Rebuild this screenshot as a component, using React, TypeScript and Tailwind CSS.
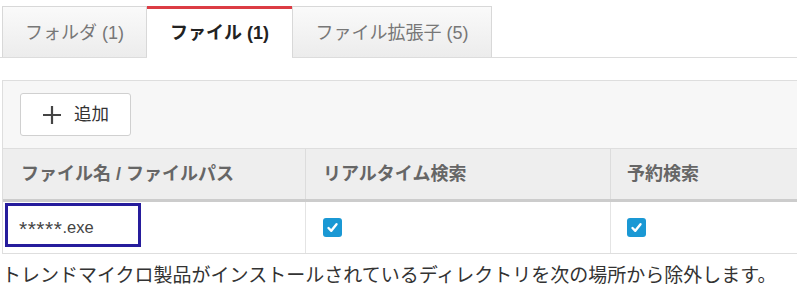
import React from "react";

const font = { fontFamily: '"Liberation Sans", "Noto Sans CJK JP", sans-serif' };

function Check() {
  return (
    <div className="w-[19px] h-[19px] rounded-[3px] bg-[#1a98d4] flex items-center justify-center">
      <svg width="13" height="13" viewBox="0 0 13 13">
        <path d="M2.5 7 L5.3 9.8 L10.5 3.2" fill="none" stroke="white" strokeWidth="2.4" strokeLinecap="round" strokeLinejoin="round" />
      </svg>
    </div>
  );
}

export default function App() {
  return (
    <div className="relative w-[800px] h-[300px] bg-white overflow-hidden" style={font}>
      <div className="flex pt-[6px] pl-[2px] w-[797px] border-b border-[#dcdcdc]">
        <div className="w-[145px] h-[51px] pt-[2px] flex items-center justify-center border border-b-0 border-[#d8d8d8] bg-gradient-to-b from-[#fafafa] to-[#ececec] text-[18px] text-[#777]">
          フォルダ (1)
        </div>
        <div className="w-[145px] h-[52px] -mb-px flex items-center justify-center border-t-[3px] border-t-[#dc3c44] bg-white text-[18px] font-bold text-[#222]">
          ファイル (1)
        </div>
        <div className="w-[200px] h-[51px] pt-[2px] flex items-center justify-center border border-b-0 border-[#d8d8d8] bg-gradient-to-b from-[#fafafa] to-[#ececec] text-[18px] text-[#777]">
          ファイル拡張子 (5)
        </div>
      </div>

      <div className="mt-[22px] ml-[2px] w-[795px] border-l border-t border-[#dedede]">
        <div className="h-[67px] bg-[#f7f7f7] flex items-center pl-[17px]">
          <button className="h-[43px] w-[111px] bg-white border border-[#d0d0d0] rounded-[3px] flex items-center justify-center gap-[12px] text-[17.5px] text-[#333]">
            <svg width="20" height="20" viewBox="0 0 20 20">
              <path d="M10 1 V19 M1 10 H19" stroke="#444" strokeWidth="2.2" />
            </svg>
            <span>追加</span>
          </button>
        </div>
        <div className="flex h-[54px] bg-[#eeeeee] border-t border-[#dedede] border-b-[3px] border-b-[#cccccc] text-[18px] font-bold text-[#666]">
          <div className="w-[303px] flex items-center pl-[18px] border-r border-[#dcdcdc]">ファイル名 / ファイルパス</div>
          <div className="w-[305px] flex items-center pl-[17px] border-r border-[#dcdcdc]">リアルタイム検索</div>
          <div className="flex-1 flex items-center pl-[16px]">予約検索</div>
        </div>
        <div className="flex h-[52px] border-b border-[#dedede] bg-white">
          <div className="w-[303px] flex items-center pl-[16px] border-r border-[#e4e4e4] text-[16.5px] text-[#444]">
            <span className="relative top-[1px] text-[21px] leading-none tracking-[0.5px]">*****</span>
            <span>.exe</span>
          </div>
          <div className="w-[305px] flex items-center pl-[17px] border-r border-[#e4e4e4]"><Check /></div>
          <div className="flex-1 flex items-center pl-[16px]"><Check /></div>
        </div>
      </div>

      <p className="mt-[10px] ml-[2px] text-[19px] leading-[24px] text-[#333] whitespace-nowrap">
        トレンドマイクロ製品がインストールされているディレクトリを次の場所から除外します。
      </p>

      <div className="absolute left-[5px] top-[203px] w-[136px] h-[44px] border-[3px] border-[#261c9c]" />
    </div>
  );
}
